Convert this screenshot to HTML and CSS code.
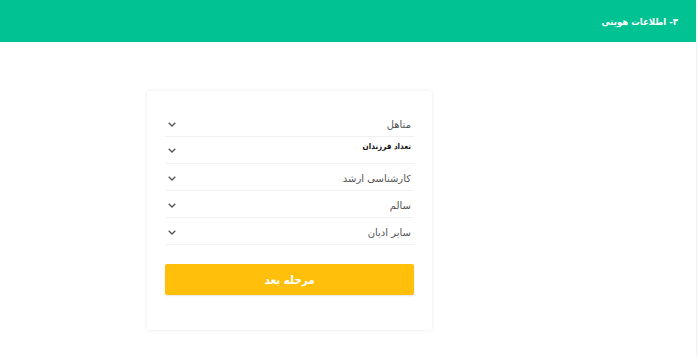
FILE: index.html
```html
<!DOCTYPE html>
<html lang="fa">
<head>
<meta charset="utf-8">
<link rel="stylesheet" href="styles.css">
</head>
<body>
<div class="page" dir="rtl">
  <header class="header">
    <h1 class="title">۳- اطلاعات هویتی</h1>
  </header>
  <main class="content">
    <div class="card">
      <div class="row"><span class="value">متاهل</span><span class="chev"><svg width="8" height="5" viewBox="0 0 8 5"><path d="M0.7 0.7 L4 4 L7.3 0.7" fill="none" stroke="#555" stroke-width="1.3"/></svg></span></div>
      <div class="row row-top"><span class="value strong">تعداد فرزندان</span><span class="chev"><svg width="8" height="5" viewBox="0 0 8 5"><path d="M0.7 0.7 L4 4 L7.3 0.7" fill="none" stroke="#555" stroke-width="1.3"/></svg></span></div>
      <div class="row"><span class="value">کارشناسی ارشد</span><span class="chev"><svg width="8" height="5" viewBox="0 0 8 5"><path d="M0.7 0.7 L4 4 L7.3 0.7" fill="none" stroke="#555" stroke-width="1.3"/></svg></span></div>
      <div class="row"><span class="value">سالم</span><span class="chev"><svg width="8" height="5" viewBox="0 0 8 5"><path d="M0.7 0.7 L4 4 L7.3 0.7" fill="none" stroke="#555" stroke-width="1.3"/></svg></span></div>
      <div class="row"><span class="value">سایر ادیان</span><span class="chev"><svg width="8" height="5" viewBox="0 0 8 5"><path d="M0.7 0.7 L4 4 L7.3 0.7" fill="none" stroke="#555" stroke-width="1.3"/></svg></span></div>
      <button class="btn">مرحله بعد</button>
    </div>
  </main>
</div>
</body>
</html>
```

FILE: styles.css
```css
html, body {
  margin: 0;
  padding: 0;
  background: #fff;
}
body {
  font-family: "DejaVu Sans", "Noto Sans", sans-serif;
}
.page {
  width: 696px;
  height: 357px;
  background: #fff;
  box-shadow: 0 1px 3px rgba(0,0,0,0.12);
}
.header {
  height: 42px;
  background: #00c292;
  display: flex;
  align-items: center;
  padding-right: 18px;
  box-sizing: border-box;
}
.title {
  margin: 0;
  color: #fff;
  font-family: "DejaVu Sans Condensed", "DejaVu Sans", sans-serif;
  font-stretch: condensed;
  font-size: 9.5px;
  font-weight: bold;
}
.content {
  padding-top: 49px;
  padding-right: 264px;
}
.card {
  width: 285px;
  height: 239px;
  box-sizing: border-box;
  padding: 19px 18px 0 18px;
  background: #fff;
  border-radius: 3px;
  box-shadow: 0 0 4px rgba(0,0,0,0.09);
}
.row {
  height: 27px;
  display: flex;
  align-items: center;
  justify-content: space-between;
  border-bottom: 1px solid #f1f1f1;
  box-sizing: border-box;
  padding: 2px 3px 0 3px;
}
.row-top {
  align-items: flex-start;
  padding-top: 5px;
}
.row-top .chev {
  margin-top: 6px;
}
.value {
  font-size: 10px;
  color: #555;
}
.value.strong {
  color: #111;
  font-family: "DejaVu Sans Condensed", "DejaVu Sans", sans-serif;
  font-stretch: condensed;
  font-weight: bold;
  font-size: 8px;
}
.chev {
  display: flex;
  width: 8px;
  height: 5px;
}
.chev svg {
  display: block;
}
.btn {
  display: block;
  width: 249px;
  height: 31px;
  margin-top: 19px;
  border: none;
  border-radius: 2px;
  background: #ffbf0a;
  color: #fff;
  font-family: "DejaVu Sans Condensed", "DejaVu Sans", sans-serif;
  font-stretch: condensed;
  font-size: 11.5px;
  font-weight: bold;
  box-shadow: 0 1px 2px rgba(0,0,0,0.1);
}
```
